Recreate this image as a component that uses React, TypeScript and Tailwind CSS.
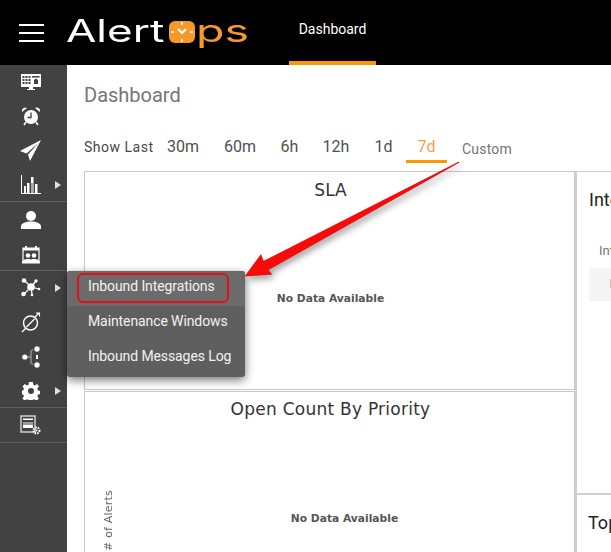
import React from "react";

const roboto = { fontFamily: "Roboto, sans-serif" };

function Dash() {
  return (
    <svg width="20" height="17" viewBox="0 0 20 17" fill="#fff">
      <path d="M0 0h20v13H12v2h2v1H6v-1h2v-2H0z" />
      <g fill="#424242">
        <path d="M1.500 2h2v2h-2zM4.500 2h2v2h-2zM7.500 2h2v2h-2zM1.500 5h2v2h-2zM4.500 5h2v2h-2zM7.500 5h2v2h-2zM1.500 8h2v2h-2zM4.500 8h2v2h-2zM7.500 8h2v2h-2z" />
        <path d="M11 2h7.500v1.500H11zM13 6l2-1.500 2 1.500v4h-4z" />
      </g>
    </svg>
  );
}
function Alarm() {
  return (
    <svg width="20" height="20" viewBox="0 0 20 20">
      <circle cx="10" cy="11" r="7" fill="#fff" />
      <path d="M1 6a3.500 3.500 0 0 1 5-4zM19 6a3.500 3.500 0 0 0-5-4z" fill="#fff" />
      <path d="M3 19l2-3M17 19l-2-3" stroke="#fff" strokeWidth="1.500" />
      <path d="M10 6.500V11.500H6.500" stroke="#424242" strokeWidth="1.300" fill="none" />
    </svg>
  );
}
function Plane() {
  return (
    <svg width="22" height="22" viewBox="0 0 22 22" fill="#fff">
      <path d="M21 0 0 11l6.500 2.500L19 2.500 8 14.500 10 21z" />
    </svg>
  );
}
function Bars() {
  return (
    <svg width="20" height="19" viewBox="0 0 20 19">
      <path d="M.5 0v18.500H20" stroke="#fff" fill="none" />
      <g fill="#fff">
        <rect x="3" y="11" width="2" height="7" />
        <rect x="6" y="8" width="2.500" height="10" />
        <rect x="10" y="2" width="2.500" height="16" />
        <rect x="14" y="9" width="2.500" height="9" />
      </g>
      <rect x="10" y="8" width="2.500" height="10" fill="#aaa" />
    </svg>
  );
}
function User() {
  return (
    <svg width="20" height="18" viewBox="0 0 20 18" fill="#fff">
      <circle cx="10" cy="5" r="5" />
      <path d="M0 18v-2.500C0 12 5 10.500 10 10.500s10 1.500 10 5V18z" />
    </svg>
  );
}
function Calendar() {
  return (
    <svg width="20" height="19" viewBox="0 0 20 19">
      <path d="M2 3h16v14H2z" fill="none" stroke="#fff" strokeWidth="1.200" />
      <path d="M2 3h16v2.500H2z" fill="#fff" />
      <path d="M5 1v3M15 1v3" stroke="#fff" strokeWidth="1.800" />
      <circle cx="7" cy="10.500" r="2.300" fill="#fff" />
      <circle cx="13" cy="10.500" r="2.300" fill="#fff" />
      <path d="M1 18.500c0-3.500 3-4.500 6-4.500s3 .8 3 .8 0-.8 3-.8 6 1 6 4.500z" fill="#fff" />
    </svg>
  );
}
function Hub() {
  return (
    <svg width="20" height="20" viewBox="0 0 20 20" fill="#fff" stroke="#fff">
      <path d="M10 9 3 2M10 9 3 16M10 9 15 3M10 9 18 11M10 9 11 16" strokeWidth="1.200" />
      <circle cx="10" cy="9" r="3.800" stroke="none" />
      <circle cx="3" cy="2.500" r="2.300" stroke="none" />
      <circle cx="2.500" cy="16" r="2.300" stroke="none" />
      <circle cx="15" cy="3" r="1.700" stroke="none" />
      <circle cx="18" cy="11" r="1.300" stroke="none" />
      <circle cx="11" cy="17" r="1.300" stroke="none" />
    </svg>
  );
}
function Maint() {
  return (
    <svg width="20" height="21" viewBox="0 0 20 21" fill="none" stroke="#fff">
      <circle cx="9.500" cy="11" r="7" strokeWidth="1.500" />
      <path d="M1 20 5 16M5.500 15 13.500 7" strokeWidth="1.300" />
      <path d="M14 5 18 1M15 1h3.500v3.500" strokeWidth="1.100" />
    </svg>
  );
}
function Flow() {
  return (
    <svg width="18" height="22" viewBox="0 0 18 22" fill="#fff">
      <path d="M5 11h4M11 3.500 9 5v12l2 1.500" fill="none" stroke="#9a9a9a" strokeWidth="1.300" />
      <circle cx="2.800" cy="11" r="2.600" />
      <circle cx="15" cy="3" r="2.700" />
      <circle cx="15" cy="19" r="2.700" />
      <rect x="14" y="9" width="2" height="4" />
    </svg>
  );
}
function Gear() {
  return (
    <svg width="18" height="18" viewBox="0 0 24 24" fill="#fff">
      <path
        fillRule="evenodd"
        d="M14.500 0l.7 3.600 2 .9 3-2 2.500 3.500-2.300 2.700.6 2.300 3 1v4l-3 1-.6 2 2 3-3 3-3-2-2 .8-.9 3h-4l-.9-3-2-.8-3 2-3-3 2-3-.8-2-3-1v-4l3-1 .8-2.300-2-2.700 3-3.500 3 2 2-.9.7-3.600zM12 8a4 4 0 1 0 0 8 4 4 0 0 0 0-8z"
      />
    </svg>
  );
}
function Report() {
  return (
    <svg width="23" height="21" viewBox="0 0 23 21">
      <path d="M1 1h14v16H1z" fill="none" stroke="#d0d0d0" strokeWidth="1.500" />
      <path d="M3 3.500h10v1.500H3z" fill="#fff" />
      <path d="M3 7h10v3H3z" fill="#9a9a9a" />
      <path d="M3 10h10v3H3z" fill="#fff" />
      <circle cx="16.500" cy="15.500" r="3" fill="none" stroke="#fff" strokeWidth="2" strokeDasharray="1.500 1" />
      <circle cx="16.500" cy="15.500" r="1" fill="#fff" />
    </svg>
  );
}

function Caret() {
  return <span className="absolute left-[55px] top-1/2 -translate-y-1/2 border-y-[4px] border-l-[6px] border-y-transparent border-l-[#e0e0e0]" />;
}

function Item({ h, children, caret }: { h: string; children: React.ReactNode; caret?: boolean }) {
  return (
    <div className={`relative flex items-center justify-center pr-[5px] ${h}`}>
      {children}
      {caret && <Caret />}
    </div>
  );
}

function Sidebar() {
  return (
    <aside className="w-[67px] shrink-0 bg-[#424242]">
      <div className="border-b border-[#5e5e5e]">
        <Item h="h-[34px]"><Dash /></Item>
        <Item h="h-[34px]"><Alarm /></Item>
        <Item h="h-[35px]"><Plane /></Item>
        <Item h="h-[33px]" caret><Bars /></Item>
      </div>
      <div className="border-b border-[#5e5e5e]">
        <Item h="h-[36px]"><User /></Item>
        <Item h="h-[32px]"><Calendar /></Item>
      </div>
      <div className="border-b border-[#5e5e5e]">
        <Item h="h-[34px]" caret><Hub /></Item>
        <Item h="h-[35px]"><Maint /></Item>
        <Item h="h-[34px]"><Flow /></Item>
        <Item h="h-[33px]" caret><Gear /></Item>
      </div>
      <div className="border-b border-[#5e5e5e]">
        <Item h="h-[34px]"><Report /></Item>
      </div>
    </aside>
  );
}

function Logo() {
  const inter = { fontFamily: "Inter, sans-serif" };
  return (
    <div className="mb-[4px] ml-[22px] flex h-[30px] items-center text-[31px] leading-[30px] font-normal" style={inter}>
      <span className="inline-block w-[103px] origin-left scale-x-[1.42] text-white">Alert</span>
      <svg width="26" height="22" viewBox="0 0 26 22" className="mt-[2px] shrink-0">
        <rect width="26" height="22" rx="6" fill="#f6982a" />
        <path d="M13 1v3M13 18v3M2 11h3M21 11h3" stroke="#fff" strokeWidth="1.500" />
        <path d="M9 8l4 4 4-4" stroke="#fff" strokeWidth="2" fill="none" />
      </svg>
      <span className="ml-[1px] inline-block w-[52px] origin-left scale-x-[1.5] text-[#f6982a]">ps</span>
    </div>
  );
}

function Header() {
  return (
    <header className="flex h-[65px] shrink-0 items-center bg-black">
      <div className="ml-[19px] flex w-[25px] flex-col gap-[6px]">
        <span className="h-[2px] bg-white" />
        <span className="h-[2px] bg-white" />
        <span className="h-[2px] bg-white" />
      </div>
      <Logo />
      <div className="ml-[41px] flex h-full w-[87px] flex-col items-center justify-between">
        <span className="mt-[21px] text-[14px] leading-[16px] text-white" style={roboto}>Dashboard</span>
        <span className="h-[4px] w-full bg-[#ff9800]" />
      </div>
    </header>
  );
}

function Ranges() {
  const items = [
    ["30m", "w-[58px]"],
    ["60m", "w-[56px]"],
    ["6h", "w-[43px]"],
    ["12h", "w-[50px]"],
    ["1d", "w-[45px]"],
  ];
  return (
    <div className="mt-[24px] flex h-[39px] items-start pl-[17px] text-[16px] text-[#505050]" style={roboto}>
      <span className="w-[70px] pt-[6px] leading-[18px] whitespace-nowrap text-[#484848] text-[14px] tracking-[0.5px]">Show Last</span>
      {items.map(([t, w]) => (
        <span key={t} className={`${w} pt-[6px] text-center leading-[18px]`}>{t}</span>
      ))}
      <span className="flex h-[31px] w-[41px] justify-center border-b-[3px] border-[#ff9800] pt-[6px] leading-[18px] text-[#f8a04a]">7d</span>
      <span className="ml-[15px] pt-[8px] text-[14px] leading-[18px] tracking-[0.2px] text-[#757575]">Custom</span>
    </div>
  );
}

function Panels() {
  const sans = { fontFamily: '"DejaVu Sans", sans-serif' };
  return (
    <div className="ml-[17px] grid grid-cols-[491px_1fr]">
      <div className="flex flex-col gap-[1px]">
        <section className="flex h-[219px] flex-col items-center border-[1.5px] border-[#c8c8c8]">
          <h2 className="ml-[2px] mt-[8px] text-[17px] leading-[20px] text-[#333]" style={sans}>SLA</h2>
          <p className="ml-[2px] mt-[92px] text-[10.7px] leading-[14px] font-bold text-[#555]" style={sans}>No Data Available</p>
        </section>
        <section className="relative flex h-[200px] flex-col items-center border-[1.5px] border-b-0 border-[#c8c8c8]">
          <h2 className="ml-[2px] mt-[6px] text-[17px] leading-[22px] tracking-[0.25px] text-[#333]" style={sans}>Open Count By Priority</h2>
          <p className="ml-[30px] mt-[92px] text-[10.7px] leading-[14px] font-bold text-[#555]" style={sans}>No Data Available</p>
          <span className="absolute left-[17px] top-[98px] text-[11px] leading-[14px] text-[#666] [writing-mode:vertical-rl] rotate-180 tracking-[0.2px]" style={sans}># of Alerts</span>
        </section>
      </div>
      <div className="flex flex-col overflow-hidden">
        <section className="h-[322px] border-t border-l-2 border-[#d0d0d0] pl-[12px]" style={roboto}>
          <h3 className="mt-[16px] text-[18px] leading-[24px] whitespace-nowrap text-[#222]">Integrations</h3>
          <p className="ml-[10px] mt-[31px] text-[13px] leading-[16px] whitespace-nowrap text-[#777]">Integration</p>
          <div className="mt-[9px] h-[33px] bg-[#f5f5f5] pl-[20px] text-[12px] leading-[33px] text-[#bbb]">No</div>
        </section>
        <section className="flex-1 border-t-2 border-l-2 border-[#d0d0d0] pl-[11px]" style={roboto}>
          <h3 className="mt-[16px] text-[18px] leading-[24px] whitespace-nowrap text-[#222]">Top Alerts</h3>
        </section>
      </div>
    </div>
  );
}

function Menu() {
  const row = "flex h-[35px] items-center pb-[4px] pl-[21px] text-[14px] tracking-[-0.1px] text-[#f2f2f2]";
  return (
    <div className="absolute left-[67px] top-[271px] h-[106px] w-[178px] overflow-hidden rounded-[3px] bg-[#5f5f5f] shadow-[0_3px_10px_rgba(0,0,0,0.55)]" style={roboto}>
      <div className={`${row} relative bg-[#6b6b6b]`}>
        Inbound Integrations
        <span className="absolute left-[10px] top-[2px] h-[30px] w-[152px] rounded-[6px] border-2 border-[#e3101a]" />
      </div>
      <div className={row}>Maintenance Windows</div>
      <div className={row}>Inbound Messages Log</div>
    </div>
  );
}

function Arrow() {
  return (
    <svg className="absolute left-[230px] top-[150px] drop-shadow-[2px_4px_3px_rgba(0,0,0,0.35)]" width="240" height="140" viewBox="230 150 240 140">
      <path d="M459 161.500 263.500 261 261 254 244.500 276.500 272.500 274.500 268.500 270 459.500 162.500z" fill="#f60a0a" />
    </svg>
  );
}

export default function App() {
  return (
    <div className="relative flex h-[552px] w-[611px] flex-col overflow-hidden bg-white">
      <Header />
      <div className="flex min-h-0 flex-1">
        <Sidebar />
        <main className="min-w-0 flex-1">
          <h1 className="ml-[17px] mt-[17px] text-[20px] leading-[26px] text-[#757575]" style={roboto}>Dashboard</h1>
          <Ranges />
          <Panels />
        </main>
      </div>
      <Menu />
      <Arrow />
    </div>
  );
}
